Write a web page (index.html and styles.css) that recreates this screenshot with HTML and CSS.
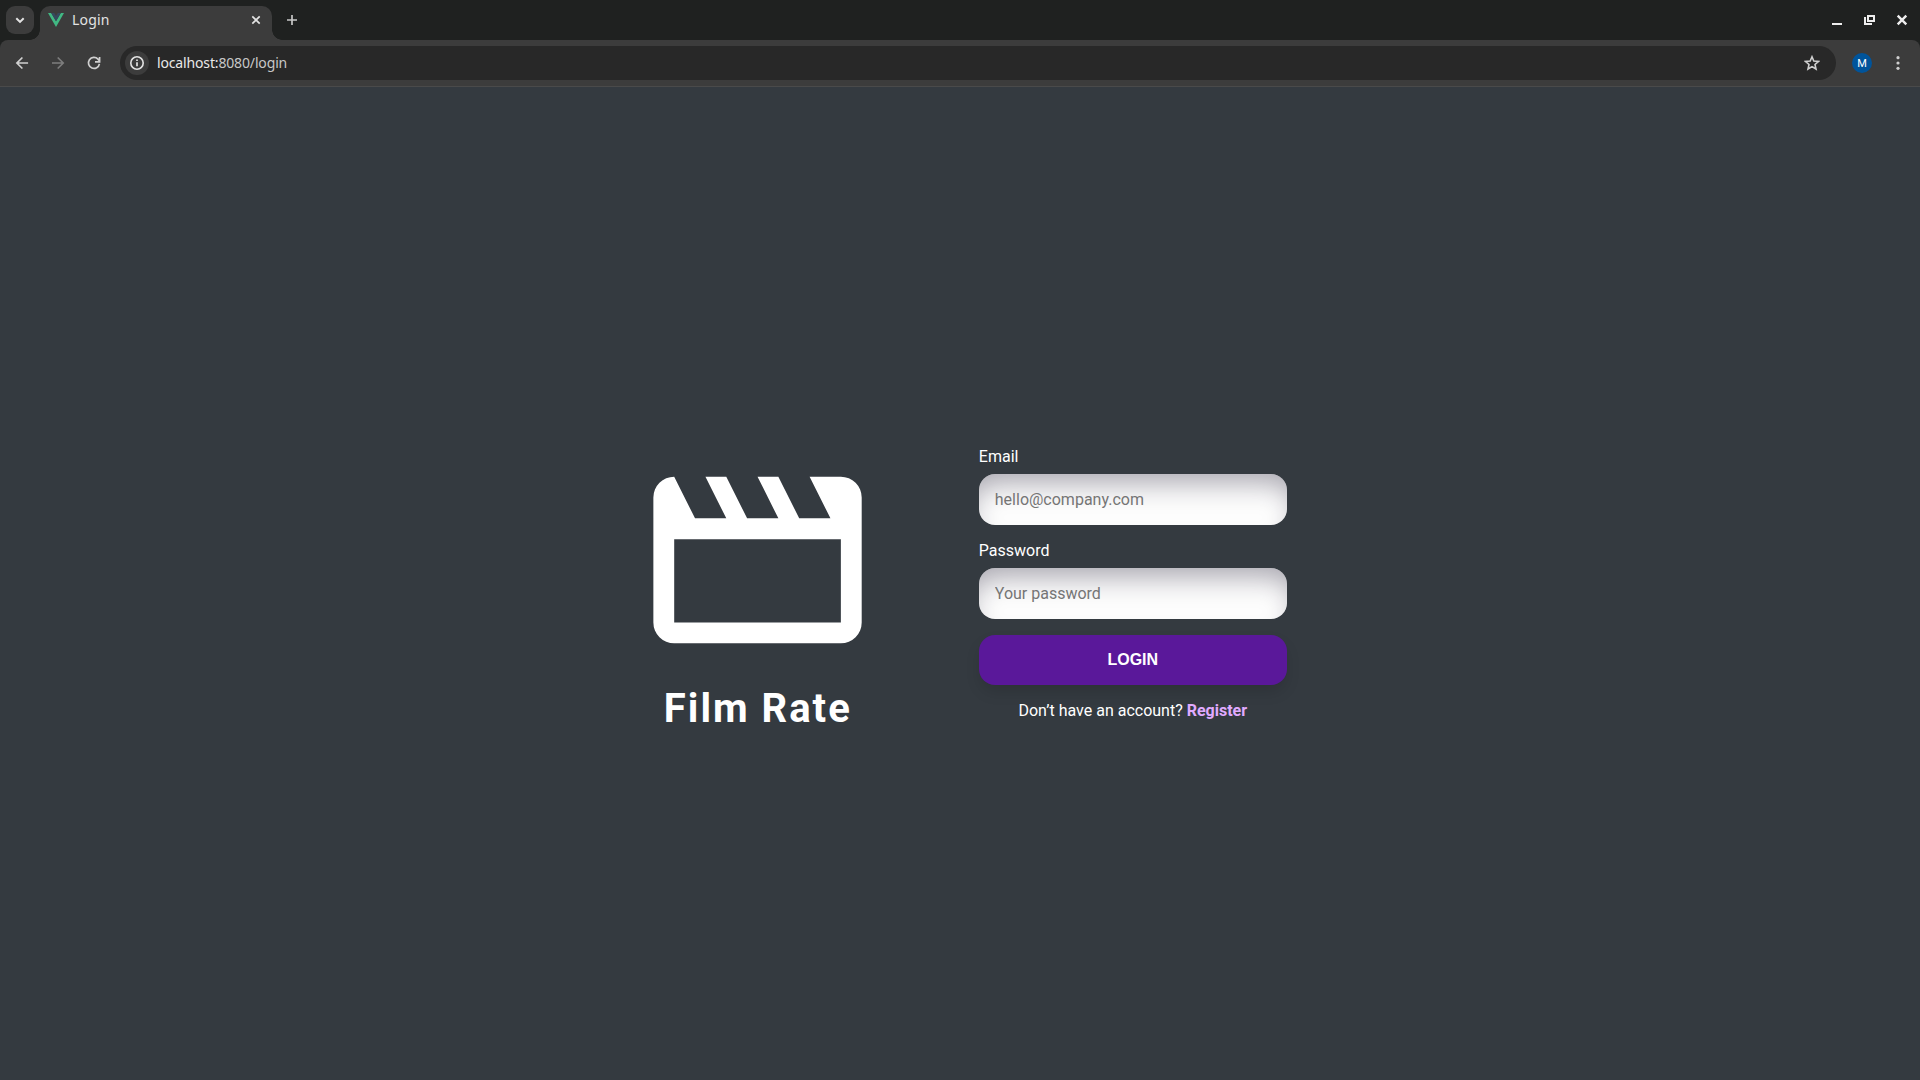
FILE: index.html
```html
<!DOCTYPE html>
<html lang="en">
<head>
<meta charset="utf-8">
<title>Login</title>
<link rel="stylesheet" href="styles.css">
</head>
<body>
<header class="browser">
  <div class="tabstrip">
    <div class="tab-search"><svg width="28" height="28" viewBox="0 0 28 28"><path d="M10.3 12.2l3.7 3.7 3.7-3.7" fill="none" stroke="#e3e3e3" stroke-width="2"/></svg></div>
    <div class="tab">
      <svg class="vue" width="16" height="14" viewBox="0 0 16 14"><path d="M0 0h3.2L8 8.300 12.800 0H16L8 13.900z" fill="#41b883"/><path d="M3.200 0h3L8 3.100 9.800 0h3L8 8.300z" fill="#35495e"/></svg>
      <span class="tab-title">Login</span>
      <svg class="tab-close" width="10" height="10" viewBox="0 0 10 10"><path d="M1.300 1.300l7.400 7.400M8.700 1.300L1.300 8.700" stroke="#e3e3e3" stroke-width="1.700"/></svg>
    </div>
    <svg class="new-tab" width="12" height="12" viewBox="0 0 12 12"><path d="M6 1v10M1 6h10" stroke="#c7c7c7" stroke-width="1.700"/></svg>
    <div class="window-buttons">
      <svg width="12" height="12" viewBox="0 0 12 12"><path d="M2 9h10v2H2z" fill="#eee"/></svg>
      <svg width="12" height="12" viewBox="0 0 12 12"><path d="M5 2h6v5H5z M2 3v7h7" fill="none" stroke="#eee" stroke-width="2"/></svg>
      <svg width="12" height="12" viewBox="0 0 12 12"><path d="M1.700 1.700l8.600 8.600M10.300 1.700l-8.600 8.600" stroke="#eee" stroke-width="2.400"/></svg>
    </div>
  </div>
  <div class="toolbar">
    <nav class="nav">
      <svg width="14" height="14" viewBox="0 0 14 14"><path d="M13.100 7H2.100M7.400 1.500L1.900 7l5.500 5.500" fill="none" stroke="#d0d0d0" stroke-width="1.700"/></svg>
      <svg width="14" height="14" viewBox="0 0 14 14"><path d="M1 7h11M6.700 1.500L12.200 7l-5.500 5.500" fill="none" stroke="#7d7d7d" stroke-width="1.700"/></svg>
      <svg width="14" height="14" viewBox="0 0 14 14"><path d="M12.400 7.800A5.500 5.500 0 1 1 11 3.200L12.500 5M12.600 1v4.800H8" fill="none" stroke="#d0d0d0" stroke-width="1.700"/></svg>
    </nav>
    <div class="omnibox">
      <div class="site-info"><svg width="16" height="16" viewBox="0 0 16 16"><circle cx="8" cy="8" r="6.200" fill="none" stroke="#e3e3e3" stroke-width="1.600"/><path d="M8 7.200v4M8 4.400v1.700" stroke="#e3e3e3" stroke-width="1.700"/></svg></div>
      <span class="url"><span class="host">localhost:</span>8080/login</span>
      <svg class="star" width="16" height="16" viewBox="0 0 16 16"><path d="M8 1.800l1.800 4.200 4.700.4-3.500 3.100 1 4.500L8 11.600 4 14l1-4.500L1.500 6.400l4.700-.4z" fill="none" stroke="#cfcfcf" stroke-width="1.600"/></svg>
    </div>
    <div class="avatar">M</div>
    <svg class="menu" width="4" height="14" viewBox="0 0 4 14" fill="#cfcfcf"><circle cx="2" cy="1.700" r="1.600"/><circle cx="2" cy="7" r="1.600"/><circle cx="2" cy="12.300" r="1.600"/></svg>
  </div>
</header>
<main class="login-page">
  <section class="brand">
    <svg class="logo" width="250" height="250" viewBox="0.045 0 24 24"><path fill="#fff" fill-rule="evenodd" d="M4 4l2 4h3L7 4h2l2 4h3l-2-4h2l2 4h3l-2-4h3a2 2 0 0 1 2 2v12a2 2 0 0 1-2 2H4a2 2 0 0 1-2-2V6a2 2 0 0 1 2-2zM4 10v8h16v-8z"/></svg>
    <h1 class="brand-name">Film Rate</h1>
  </section>
  <form class="form">
    <label class="label" for="email">Email</label>
    <input class="input" id="email" type="email" placeholder="hello@company.com">
    <label class="label" for="password">Password</label>
    <input class="input" id="password" type="password" placeholder="Your password">
    <button class="submit" type="button">LOGIN</button>
    <p class="hint">Don’t have an account? <a class="register">Register</a></p>
  </form>
</main>
</body>
</html>
```
FILE: styles.css
```css
* { box-sizing: border-box; }
body {
  margin: 0;
  height: 1080px;
  overflow: hidden;
  display: flex;
  flex-direction: column;
  background: #343a40;
  color: #fff;
  font: 16px Roboto, sans-serif;
}
svg { display: block; flex: none; }

.browser { background: #1f2120; font-family: "Noto Sans", sans-serif; font-size: 14px; color: #e3e3e3; }
.tabstrip { height: 40px; display: flex; align-items: center; padding-left: 6px; }
.tab-search { width: 28px; height: 28px; border-radius: 9px; background: #3c3c3c; }
.tab {
  position: relative;
  align-self: flex-end;
  width: 232px;
  height: 34px;
  margin-left: 6px;
  padding: 0 11px 6px 8px;
  display: flex;
  align-items: center;
  border-radius: 10px 10px 0 0;
  background: #3c3c3c;
}
/* concave feet joining the tab to the toolbar */
.tab::before, .tab::after { content: ""; position: absolute; bottom: 0; width: 10px; height: 10px; }
.tab::before { left: -10px; background: radial-gradient(circle at 0 0, transparent 9.500px, #3c3c3c 10px); }
.tab::after { right: -10px; background: radial-gradient(circle at 100% 0, transparent 9.500px, #3c3c3c 10px); }
.tab-title { flex: 1; margin-left: 8px; padding-bottom: 2px; letter-spacing: 0.200px; }
.new-tab { margin-left: 14px; }
.window-buttons { margin-left: auto; padding-right: 12px; display: flex; gap: 21px; }

.toolbar {
  height: 47px;
  display: flex;
  align-items: center;
  padding: 0 20px 1px 15px;
  border-bottom: 1px solid #4a4a4a;
  border-radius: 8px 8px 0 0;
  background: #3c3c3c;
}
.nav { display: flex; gap: 22px; }
.omnibox {
  flex: 1;
  height: 34px;
  margin-left: 19px;
  padding: 0 16px 0 5px;
  display: flex;
  align-items: center;
  border-radius: 17px;
  background: #282828;
}
.site-info { width: 24px; height: 24px; padding: 4px; border-radius: 50%; background: #3c3c3c; }
.url { flex: 1; margin-left: 8px; color: #c7c7c7; letter-spacing: -0.150px; }
.host { color: #e8e8e8; }
.avatar {
  width: 20px;
  height: 20px;
  margin-left: 16px;
  border-radius: 50%;
  background: #00549b;
  color: #fff;
  font: 400 11px/21px Roboto, sans-serif;
  text-align: center;
}
.menu { margin-left: 24px; }

.login-page { flex: 1; display: flex; justify-content: center; align-items: flex-start; gap: 96px; padding: 348px 0.400px 0 0; }
.brand { width: 250px; text-align: center; }
.brand-name { margin: 0; font-size: 40px; line-height: 47px; letter-spacing: 2px; white-space: nowrap; }
.form { width: 308px; padding-top: 12px; display: flex; flex-direction: column; }
.label { line-height: 19px; margin-bottom: 8px; }
.input {
  width: 100%;
  height: 51px;
  margin: 0 0 16px;
  padding: 16px;
  border: 0;
  border-radius: 16px;
  background: #fdfdfd;
  box-shadow: inset 0 18px 28px -9px rgba(20, 15, 40, 0.360);
  font: 16px Roboto, sans-serif;
}
.input::placeholder { color: #757575; }
.submit {
  height: 50px;
  padding: 0;
  border: 0;
  border-radius: 16px;
  background: #5a189a;
  box-shadow: 0 8px 16px -2px rgba(0, 0, 0, 0.140);
  color: #fff;
  font: bold 16px "Liberation Sans", sans-serif;
}
.hint { margin: 16px 0 0; line-height: 19px; text-align: center; }
.register { color: #e0aaff; font-weight: 700; }
```
